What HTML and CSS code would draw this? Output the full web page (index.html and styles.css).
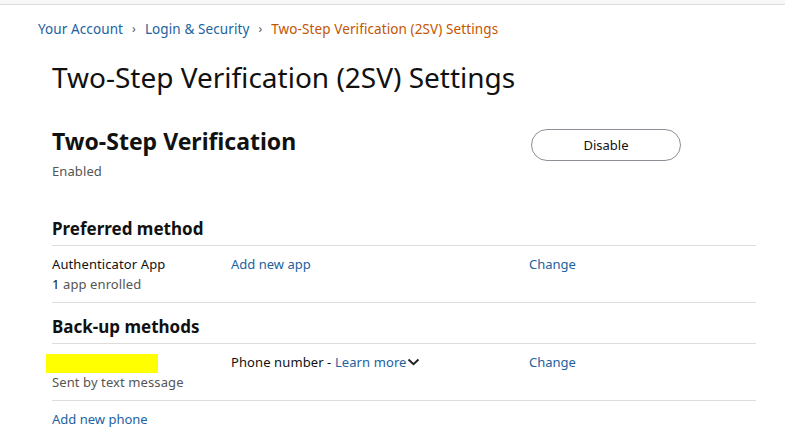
FILE: index.html
```html
<!DOCTYPE html>
<html>
<head>
<meta charset="utf-8">
<link rel="stylesheet" href="styles.css">
</head>
<body>
<div class="topbar"></div>
<nav class="crumbs">
  <a class="crumb" href="#">Your Account</a>
  <span class="sep">›</span>
  <a class="crumb" href="#">Login &amp; Security</a>
  <span class="sep">›</span>
  <span class="crumb current">Two-Step Verification (2SV) Settings</span>
</nav>
<main class="page">
  <h1 class="title">Two-Step Verification (2SV) Settings</h1>
  <section class="status">
    <div class="status-text">
      <h2 class="status-head">Two-Step Verification</h2>
      <div class="muted">Enabled</div>
    </div>
    <button class="pill">Disable</button>
  </section>

  <h3 class="section-head">Preferred method</h3>
  <div class="row">
    <div class="col1">
      <div class="dark">Authenticator App</div>
      <div class="muted"><span class="num">1</span> app enrolled</div>
    </div>
    <div class="col2"><a href="#" class="link">Add new app</a></div>
    <div class="col3"><a href="#" class="link">Change</a></div>
  </div>

  <h3 class="section-head">Back-up methods</h3>
  <div class="row">
    <div class="col1">
      <div class="redact"></div>
      <div class="muted">Sent by text message</div>
    </div>
    <div class="col2 dark">Phone number - <a href="#" class="link">Learn more</a><svg class="chev" width="13" height="8" viewBox="0 0 13 8"><path d="M1.5 1.5 L6.5 6.2 L11.5 1.5" fill="none" stroke="#222" stroke-width="2"/></svg></div>
    <div class="col3"><a href="#" class="link">Change</a></div>
  </div>
  <div class="add-row"><a href="#" class="link">Add new phone</a></div>
</main>
</body>
</html>
```
FILE: styles.css
```css
* { box-sizing: border-box; }
body {
  margin: 0;
  font-family: "Noto Sans", "Open Sans", sans-serif;
  font-size: 13px;
  color: #111;
  background: #fff;
}
a { text-decoration: none; }
.topbar {
  height: 5px;
  background: #f7f7f7;
  border-bottom: 1px solid #dcdcdc;
  margin-right: 1px;
}
.crumbs {
  display: flex;
  align-items: center;
  padding: 13px 0 0 38px;
  height: 35px;
  line-height: 18px;
  font-size: 13.5px;
  letter-spacing: 0.1px;
}
.crumb { color: #2162a1; }
.crumb.current { color: #c45500; }
.sep { color: #555; font-size: 12px; margin: 0 9px; }
.page {
  padding: 0 30px 0 52px;
  width: 786px;
}
.title {
  font-weight: 400;
  font-size: 28px;
  line-height: 36px;
  margin: 19px 0 0 0;
  letter-spacing: 0;
}
.status {
  display: flex;
  align-items: flex-start;
  margin-top: 31px;
}
.status-text { width: 479px; }
.status-head {
  font-size: 23px;
  font-weight: 700;
  line-height: 30px;
  margin: 0 0 5px 0;
}
.pill {
  margin-top: 3px;
  width: 150px;
  height: 32px;
  border: 1px solid #8d9096;
  border-radius: 16px;
  background: #fff;
  font-family: inherit;
  font-size: 13px;
  color: #111;
}
.muted { color: #555; line-height: 20px; letter-spacing: 0.1px; }
.num { color: #111; }
.dark { color: #111; line-height: 20px; letter-spacing: 0.1px; }
.section-head {
  font-size: 17px;
  font-weight: 700;
  line-height: 22px;
  margin: 37px 0 0 0;
  padding-bottom: 5px;
  border-bottom: 1px solid #ddd;
}
.row {
  display: flex;
  padding: 8px 0 8px 0;
  border-bottom: 1px solid #ddd;
}
.row + .section-head { margin-top: 13px; }
.col1 { width: 179px; }
.col2 { width: 298px; line-height: 20px; }
.col3 { line-height: 20px; }
.link { color: #2162a1; }
.redact {
  width: 112px;
  height: 19px;
  background: #ffff00;
  margin-left: -6px;
  margin-top: 2px;
  margin-bottom: -1px;
}
.chev { margin-left: 0; vertical-align: 1px; }
.add-row { padding-top: 8px; line-height: 20px; }
```
